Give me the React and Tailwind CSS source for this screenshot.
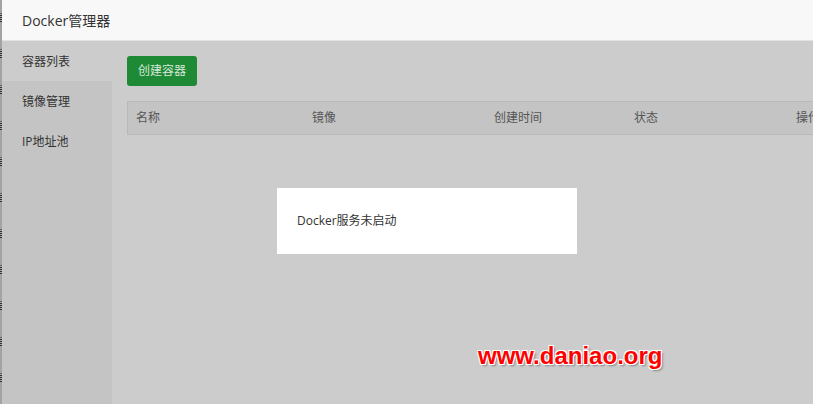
import React from "react";

export default function App() {
  const cols = [
    { name: "名称", w: "w-[176px]" },
    { name: "镜像", w: "w-[182px]" },
    { name: "创建时间", w: "w-[140px]" },
    { name: "状态", w: "w-[162px]" },
    { name: "操作", w: "w-[120px]" },
  ];
  const marks = Array.from({ length: 11 });

  return (
    <div className="w-[813px] h-[404px] flex overflow-hidden bg-[#cccccc] text-[12px] font-['Open_Sans','Noto_Sans_CJK_SC',sans-serif]">
      {/* left edge strip */}
      <div className="w-[2px] shrink-0 bg-[#a3a3a3] flex flex-col pt-[13px] gap-[27px]">
        {marks.map((_, i) => (
          <div key={i} className="flex flex-col gap-[1px] shrink-0">
            <div className="h-[1px] bg-[#4a6a8a]" />
            <div className="h-[1px] bg-[#333]" />
            <div className="h-[1px] bg-[#333]" />
            <div className="h-[1px] bg-[#333]" />
            <div className="h-[1px] bg-[#333]" />
          </div>
        ))}
      </div>

      <div className="flex-1 flex flex-col min-w-0">
        {/* header */}
        <div className="h-[41px] shrink-0 bg-[#f8f8f8] border-b border-[#e2e2e2] flex items-center pl-[20px] text-[14px] text-[#333]">
          Docker管理器
        </div>

        <div className="flex flex-1 min-h-0">
          {/* sidebar */}
          <div className="w-[110px] shrink-0 bg-[#c4c4c4] text-[#333]">
            <div className="h-[40px] bg-[#cccccc] flex items-center pl-[20px] pt-[1px]">容器列表</div>
            <div className="h-[40px] flex items-center pl-[20px] pt-[1px]">镜像管理</div>
            <div className="h-[40px] flex items-center pl-[20px] pt-[1px]">IP地址池</div>
          </div>

          {/* main */}
          <div className="flex-1 min-w-0 pl-[15px] pt-[15px] relative">
            <button className="w-[70px] h-[30px] rounded-[3px] bg-[#1e8a35] text-[#d8e8da] text-[12px] flex items-center justify-center">
              创建容器
            </button>
            <div className="mt-[15px] h-[34px] w-[800px] border border-[#b9b9b9] bg-[#c4c4c4] flex items-center text-[#555]">
              {cols.map((c) => (
                <div key={c.name} className={`${c.w} shrink-0 pl-[8px]`}>
                  {c.name}
                </div>
              ))}
            </div>

            {/* message dialog */}
            <div className="absolute left-[165px] top-[147px] w-[300px] h-[66px] bg-white flex items-center pl-[20px] text-[#333]">
              Docker服务未启动
            </div>

            {/* watermark */}
            <div className="absolute left-[366px] top-[297px] text-[24px] font-bold text-[#ff0000] font-['Liberation_Sans',sans-serif] [text-shadow:1px_1px_0_#fff,-1px_-1px_0_#fff,1px_-1px_0_#fff,-1px_1px_0_#fff,2px_2px_2px_rgba(0,0,0,0.35)]">
              www.daniao.org
            </div>
          </div>
        </div>
      </div>
    </div>
  );
}
